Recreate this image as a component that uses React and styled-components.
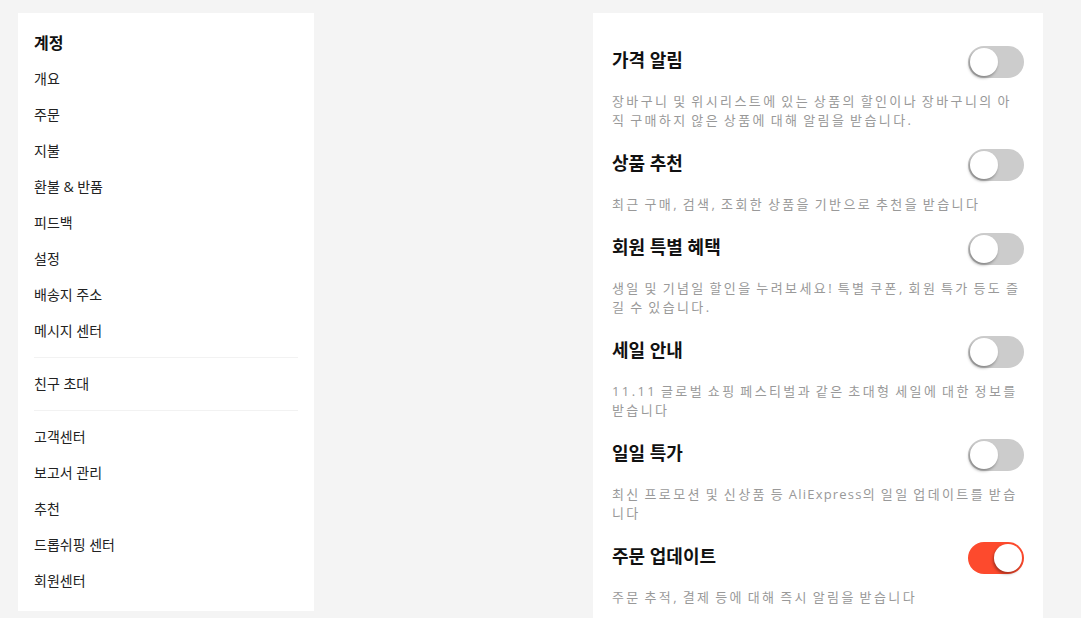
import React, { useState } from "react";
import styled, { createGlobalStyle } from "styled-components";

const GlobalStyle = createGlobalStyle`
  html, body {
    margin: 0;
    padding: 0;
    background: #f4f4f4;
    overflow: hidden;
  }
  body {
    font-family: "Open Sans", "Noto Sans CJK KR", sans-serif;
  }
`;

const menuGroups = [
  ["개요", "주문", "지불", "환불 & 반품", "피드백", "설정", "배송지 주소", "메시지 센터"],
  ["친구 초대"],
  ["고객센터", "보고서 관리", "추천", "드롭쉬핑 센터", "회원센터"],
];

const settings = [
  {
    title: "가격 알림",
    desc: ["장바구니 및 위시리스트에 있는 상품의 할인이나 장바구니의 아직 구매하지 않은 상품에 대해 알림을 받습니다."],
    on: false,
  },
  {
    title: "상품 추천",
    desc: ["최근 구매, 검색, 조회한 상품을 기반으로 추천을 받습니다"],
    on: false,
  },
  {
    title: "회원 특별 혜택",
    desc: ["생일 및 기념일 할인을 누려보세요! 특별 쿠폰, 회원 특가 등도 즐길 수 있습니다."],
    on: false,
  },
  {
    title: "세일 안내",
    desc: ["11.11 글로벌 쇼핑 페스티벌과 같은 초대형 세일에 대한 정보를 받습니다"],
    on: false,
  },
  {
    title: "일일 특가",
    desc: ["최신 프로모션 및 신상품 등 ", { latin: "AliExpress" }, "의 일일 업데이트를 받습니다"],
    on: false,
  },
  {
    title: "주문 업데이트",
    desc: ["주문 추적, 결제 등에 대해 즉시 알림을 받습니다"],
    on: true,
  },
];

function Toggle({ initial }) {
  const [on, setOn] = useState(initial);
  return (
    <Switch $on={on} onClick={() => setOn(!on)} aria-pressed={on}>
      <Knob $on={on} />
    </Switch>
  );
}

export default function App() {
  return (
    <Page>
      <GlobalStyle />
      <Sidebar>
        <SideTitle>계정</SideTitle>
        {menuGroups.map((group, i) => (
          <React.Fragment key={i}>
            {i > 0 && <Divider />}
            {group.map((item) => (
              <MenuItem key={item}>{item}</MenuItem>
            ))}
          </React.Fragment>
        ))}
      </Sidebar>
      <div />
      <Panel>
        {settings.map((s) => (
          <Section key={s.title}>
            <Row>
              <Title>{s.title}</Title>
              <Toggle initial={s.on} />
            </Row>
            <Desc>
              {s.desc.map((part, i) =>
                typeof part === "string" ? part : <Latin key={i}>{part.latin}</Latin>
              )}
            </Desc>
          </Section>
        ))}
      </Panel>
    </Page>
  );
}

const Page = styled.div`
  display: grid;
  grid-template-columns: 296px 1fr 450px;
  align-items: start;
  padding: 13px 38px 0 18px;
  height: 618px;
  box-sizing: border-box;
`;

const Sidebar = styled.nav`
  background: #fff;
  padding: 12px 16px 12px 16px;
  display: flex;
  flex-direction: column;
`;

const SideTitle = styled.h3`
  margin: 0;
  font-size: 16px;
  font-weight: 700;
  line-height: 36px;
  color: #111;
`;

const MenuItem = styled.a`
  font-size: 14px;
  line-height: 36px;
  color: #222;
  cursor: pointer;
`;

const Divider = styled.hr`
  border: none;
  border-top: 1px solid #f2f2f2;
  margin: 8px 0;
`;

const Panel = styled.section`
  background: #fff;
  padding: 33px 19px 0 19px;
  min-height: 640px;
`;

const Section = styled.div`
  margin-bottom: 19px;
`;

const Row = styled.div`
  display: flex;
  align-items: center;
  justify-content: space-between;
  height: 32px;
`;

const Title = styled.h4`
  margin: 0;
  padding-bottom: 5px;
  font-size: 18px;
  line-height: 24px;
  font-weight: 700;
  color: #111;
`;

const Desc = styled.p`
  margin: 14px 0 0;
  font-size: 13px;
  line-height: 19px;
  letter-spacing: 2.4px;
  word-spacing: -2px;
  font-feature-settings: "palt";
  color: #999;
`;

const Latin = styled.span`
  letter-spacing: 1.2px;
`;

const Switch = styled.button`
  position: relative;
  width: 56px;
  height: 32px;
  border: none;
  border-radius: 16px;
  padding: 0;
  cursor: pointer;
  flex-shrink: 0;
  background: ${(p) => (p.$on ? "#fd4a2d" : "#cccccc")};
`;

const Knob = styled.span`
  position: absolute;
  top: 2px;
  left: ${(p) => (p.$on ? "26px" : "2px")};
  width: 28px;
  height: 28px;
  border-radius: 50%;
  background: #fff;
  box-shadow: -1px 2px 3px rgba(0, 0, 0, 0.35);
`;
